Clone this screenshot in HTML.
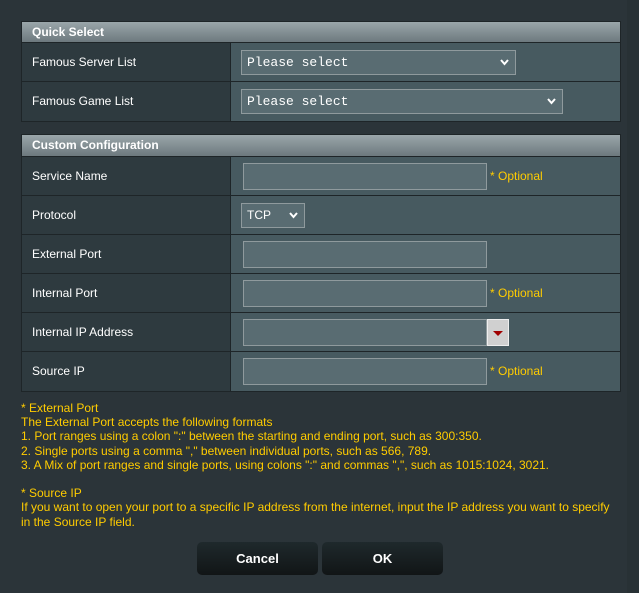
<!DOCTYPE html>
<html><head><style>
body{margin:0;width:639px;height:593px;background:#2b3439;font-family:"Liberation Sans",Arial,sans-serif;position:relative;overflow:hidden}
.edge{position:absolute;right:0;top:0;width:12px;height:593px;background:#283135}
.t{position:absolute;left:21px;width:600px;border:1px solid #1e2528;box-sizing:border-box}
.h{height:20px;background:linear-gradient(#9aa6aa,#6d797e);color:#fff;font-weight:bold;font-size:12px;line-height:20px;padding-left:10px;border-bottom:1px solid #1e2528}
.r{height:39px;border-bottom:1px solid #1e2528;display:flex;box-sizing:border-box}
.r:last-child{border-bottom:0}
.l{width:209px;background:#2e3a3f;color:#fff;font-size:12px;line-height:38px;padding-left:10px;box-sizing:border-box;border-right:1px solid #1e2528}
.v{flex:1;background:#475a60;position:relative}
.in{position:absolute;left:12px;top:6px;width:244px;height:27px;box-sizing:border-box;border:1px solid #8f9a9d;background:#596c72}
.sel{position:absolute;left:10px;top:7px;height:25px;box-sizing:border-box;border:1px solid #8f9a9d;background:#596c72;color:#fff;font-family:"Liberation Mono",monospace;font-size:13px;line-height:23px;padding-left:5px}
.sel svg{position:absolute;right:6px;top:8px}
.opt{position:absolute;left:259px;top:12px;color:#ffcc00;font-size:12px}
.notes{position:absolute;left:21px;top:401px;color:#ffcc00;font-size:12px;line-height:14.2px}
.btn{position:absolute;top:542px;width:121px;height:33px;border-radius:5px;background:linear-gradient(#1f292c,#111516);color:#fff;font-weight:bold;font-size:13px;text-align:center;line-height:33px}
</style></head><body>
<div class="edge"></div>
<div class="t" style="top:21px">
<div class="h">Quick Select</div>
<div class="r"><div class="l">Famous Server List</div><div class="v"><div class="sel" style="width:275px">Please select<svg width="9" height="7"><path d="M1 1l3.5 4L8 1" stroke="#fff" stroke-width="2" fill="none"/></svg></div></div></div>
<div class="r"><div class="l">Famous Game List</div><div class="v"><div class="sel" style="width:322px">Please select<svg width="9" height="7"><path d="M1 1l3.5 4L8 1" stroke="#fff" stroke-width="2" fill="none"/></svg></div></div></div>
</div>
<div class="t" style="top:134px">
<div class="h" style="height:21px;line-height:21px">Custom Configuration</div>
<div class="r"><div class="l">Service Name</div><div class="v"><div class="in"></div><span class="opt">* Optional</span></div></div>
<div class="r"><div class="l">Protocol</div><div class="v"><div class="sel" style="width:64px;font-family:'Liberation Sans',sans-serif;font-size:12px">TCP<svg width="9" height="7"><path d="M1 1l3.5 4L8 1" stroke="#fff" stroke-width="2" fill="none"/></svg></div></div></div>
<div class="r"><div class="l">External Port</div><div class="v"><div class="in"></div></div></div>
<div class="r"><div class="l">Internal Port</div><div class="v"><div class="in"></div><span class="opt">* Optional</span></div></div>
<div class="r"><div class="l">Internal IP Address</div><div class="v"><div class="in"></div><div style="position:absolute;left:256px;top:6px;width:22px;height:27px;background:#d0d0d0;border:1px solid #eee;box-sizing:border-box"><svg width="20" height="25"><path d="M5 11h10l-5 5z" fill="#a00000"/></svg></div></div></div>
<div class="r"><div class="l">Source IP</div><div class="v"><div class="in"></div><span class="opt">* Optional</span></div></div>
</div>
<div class="notes">* External Port<br>The External Port accepts the following formats<br>1. Port ranges using a colon ":" between the starting and ending port, such as 300:350.<br>2. Single ports using a comma "," between individual ports, such as 566, 789.<br>3. A Mix of port ranges and single ports, using colons ":" and commas ",", such as 1015:1024, 3021.<br><br>* Source IP<br>If you want to open your port to a specific IP address from the internet, input the IP address you want to specify<br>in the Source IP field.</div>
<div class="btn" style="left:197px">Cancel</div>
<div class="btn" style="left:322px">OK</div>
</body></html>
